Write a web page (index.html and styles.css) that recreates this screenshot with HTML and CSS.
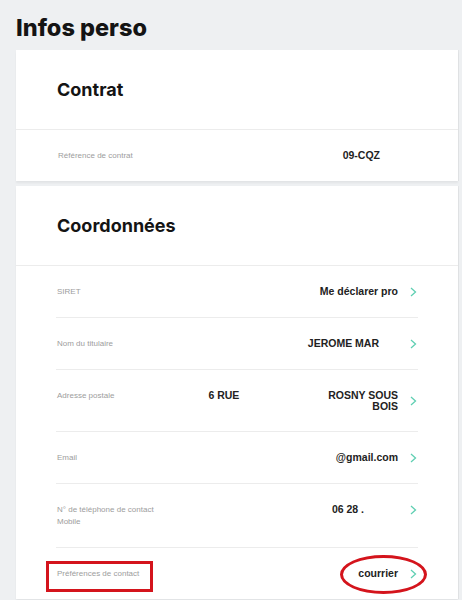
FILE: index.html
```html
<!DOCTYPE html>
<html lang="fr">
<head>
    <meta charset="UTF-8">
    <meta name="viewport" content="width=device-width, initial-scale=1.0">
    <title>Infos perso</title>
    <link rel="stylesheet" href="styles.css">
</head>
<body>

    <h1 class="titre-page">Infos perso</h1>

    <!-- Contrat -->
    <section class="carte">
        <h2 class="carte-titre">Contrat</h2>
        <div class="ligne-contrat">
            <span class="libelle">Référence de contrat</span>
            <span class="valeur">09-CQZ</span>
        </div>
    </section>

    <!-- Coordonnées -->
    <section class="carte">
        <h2 class="carte-titre">Coordonnées</h2>
        <ul class="liste">
            <li class="ligne">
                <span class="libelle">SIRET</span>
                <span class="droite">
                    <span class="valeur">Me déclarer pro</span>
                    <svg class="chevron" viewBox="0 0 7 10"><path d="M1 1l4.5 4L1 9"/></svg>
                </span>
            </li>
            <li class="ligne">
                <span class="libelle">Nom du titulaire</span>
                <span class="droite">
                    <span class="valeur">JEROME MAR<span class="masque masque-s"></span></span>
                    <svg class="chevron" viewBox="0 0 7 10"><path d="M1 1l4.5 4L1 9"/></svg>
                </span>
            </li>
            <li class="ligne">
                <span class="libelle">Adresse postale</span>
                <span class="droite">
                    <span class="valeur valeur-adresse">6 RUE <span class="masque masque-l"></span> ROSNY SOUS BOIS</span>
                    <svg class="chevron" viewBox="0 0 7 10"><path d="M1 1l4.5 4L1 9"/></svg>
                </span>
            </li>
            <li class="ligne">
                <span class="libelle">Email</span>
                <span class="droite">
                    <span class="valeur">@gmail.com</span>
                    <svg class="chevron" viewBox="0 0 7 10"><path d="M1 1l4.5 4L1 9"/></svg>
                </span>
            </li>
            <li class="ligne">
                <span class="libelle">N° de téléphone de contact<br>Mobile</span>
                <span class="droite">
                    <span class="valeur">06 28 .<span class="masque masque-m"></span></span>
                    <svg class="chevron" viewBox="0 0 7 10"><path d="M1 1l4.5 4L1 9"/></svg>
                </span>
            </li>
            <li class="ligne ligne-annotee">
                <span class="libelle">Préférences de contact</span>
                <span class="droite">
                    <span class="valeur">courrier</span>
                    <svg class="chevron" viewBox="0 0 7 10"><path d="M1 1l4.5 4L1 9"/></svg>
                </span>
                <!-- annotations rouges -->
                <span class="cadre-rouge"></span>
                <span class="ellipse-rouge"></span>
            </li>
        </ul>
    </section>

</body>
</html>
```

FILE: styles.css
```css
/* Styles généraux */
body {
    margin: 0;
    padding: 14px 4px 0 16px;
    background-color: #eef0f2;
    font-family: "Liberation Sans", Arial, sans-serif;
    color: #222;
}

.titre-page {
    margin: 0 0 8px;
    font-family: Inter, "Noto Sans", sans-serif;
    font-weight: 800;
    font-size: 23.5px;
    line-height: 28px;
    color: #141414;
}

/* Cartes */
.carte {
    background-color: #ffffff;
    margin-bottom: 5px;
    box-shadow: 0 2px 2px rgba(0, 0, 0, 0.05), 1px 0 0 #e3e5e7;
}

.carte-titre {
    margin: 0;
    height: 79px;
    padding-left: 41px;
    display: flex;
    align-items: center;
    font-family: Inter, "Noto Sans", sans-serif;
    font-weight: 700;
    font-size: 18px;
    color: #141414;
    border-bottom: 1px solid #ececec;
}

.libelle {
    font-size: 8px;
    line-height: 12px;
    color: #9d9d9d;
    padding-left: 1px;
}

.valeur {
    font-weight: bold;
    font-size: 10.5px;
    line-height: 11px;
    color: #222;
    text-align: right;
}

.ligne-contrat {
    height: 51px;
    padding: 0 78px 0 41px;
    display: flex;
    align-items: center;
    justify-content: space-between;
}

/* Liste des coordonnées */
.liste {
    list-style: none;
    margin: 0 40px;
    padding: 0;
}

.ligne {
    position: relative;
    display: flex;
    justify-content: space-between;
    align-items: flex-start;
    padding: 20px 0 19px;
    border-bottom: 1px solid #ececec;
}

.ligne:last-child {
    border-bottom: none;
}

.droite {
    display: flex;
    align-items: center;
    gap: 12px;
}

.chevron {
    width: 7px;
    height: 10px;
    margin-right: 1px;
    fill: none;
    stroke: #5fcfb2;
    stroke-width: 1.3;
}

/* zones masquées de la capture */
.masque {
    display: inline-block;
    height: 1px;
}

.masque-s { width: 19px; }
.masque-m { width: 34px; }
.masque-l { width: 83px; }

.valeur-adresse {
    max-width: 196px;
}

/* Annotations */
.cadre-rouge {
    position: absolute;
    left: -10px;
    top: 13px;
    width: 101px;
    height: 25px;
    border: 3px solid #d4141c;
}

.ellipse-rouge {
    position: absolute;
    right: -9px;
    top: 7px;
    width: 81px;
    height: 33px;
    border: 3px solid #d4141c;
    border-radius: 50%;
}
```
